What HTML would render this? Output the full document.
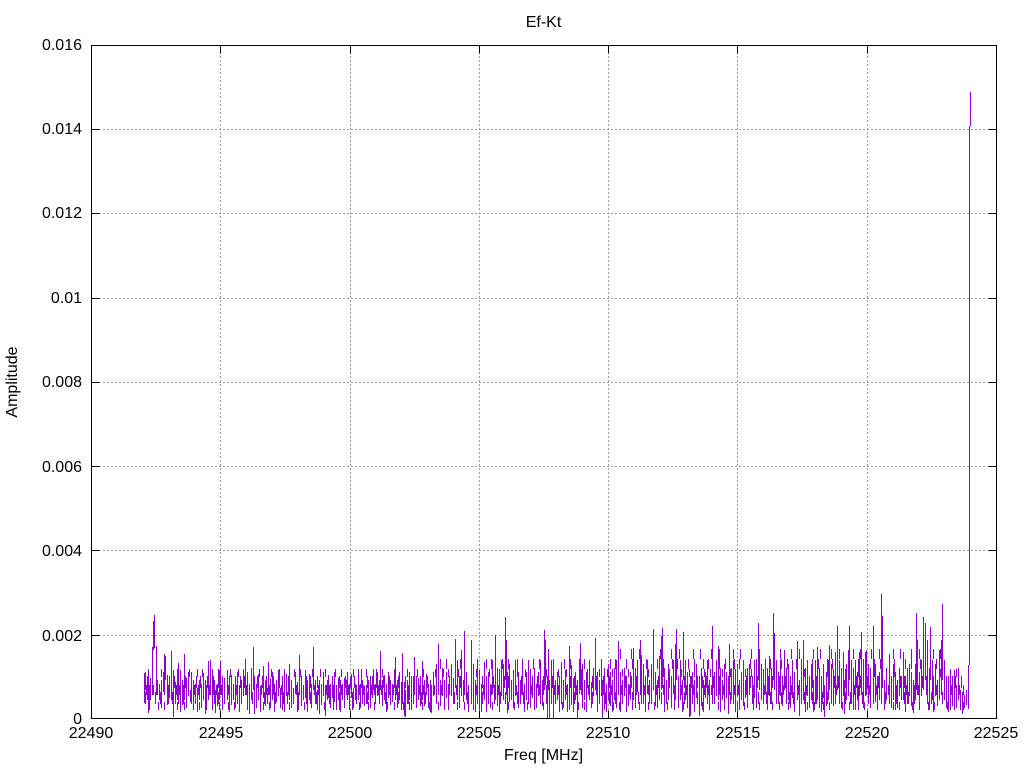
<!DOCTYPE html>
<html><head><meta charset="utf-8"><title>Ef-Kt</title>
<style>html,body{margin:0;padding:0;background:#fff}svg{display:block}text{font-family:"Liberation Sans",sans-serif;font-size:16px;fill:#000}</style>
</head><body>
<svg width="1024" height="768" viewBox="0 0 1024 768" xmlns="http://www.w3.org/2000/svg">
<rect width="1024" height="768" fill="#fff"/>
<g stroke="#a0a0a0" stroke-width="1" stroke-dasharray="2 2" fill="none">
<path d="M99 635.5H988M99 550.5H988M99 466.5H988M99 382.5H988M99 298.5H988M99 213.5H988M99 129.5H988"/>
<path d="M220.5 710V53M350.5 710V53M479.5 710V53M608.5 710V53M737.5 710V53M867.5 710V53"/>
</g>
<g stroke="#000" stroke-width="1" fill="none">
<path d="M91.5 635.5h8M91.5 550.5h8M91.5 466.5h8M91.5 382.5h8M91.5 298.5h8M91.5 213.5h8M91.5 129.5h8"/>
<path d="M996.5 635.5h-8M996.5 550.5h-8M996.5 466.5h-8M996.5 382.5h-8M996.5 298.5h-8M996.5 213.5h-8M996.5 129.5h-8"/>
<path d="M220.5 718.5v-8M350.5 718.5v-8M479.5 718.5v-8M608.5 718.5v-8M737.5 718.5v-8M867.5 718.5v-8"/>
<path d="M220.5 45.5v8M350.5 45.5v8M479.5 45.5v8M608.5 45.5v8M737.5 45.5v8M867.5 45.5v8"/>
</g>
<g fill="none" stroke="#9400d3">
<path d="M146 690H966" stroke-width="10" stroke-dasharray="1 2 1 3 1 2 1 4"/>
<path d="M147 682H966" stroke-width="12" stroke-dasharray="1 4 1 3 1 6 1 5"/>
<path d="M145 698H964" stroke-width="12" stroke-dasharray="1 3 1 5 1 4 1 7"/>
<path d="M148 673H966" stroke-width="8" stroke-dasharray="1 7 1 4 1 9 1 5 1 11"/>
<path d="M149 706H964" stroke-width="8" stroke-dasharray="1 8 1 5 1 12 1 6"/>
<path d="M440 664H950" stroke-width="10" stroke-dasharray="1 5 1 8 1 4 1 10"/>
<path d="M620 654H950" stroke-width="10" stroke-dasharray="1 10 1 7 1 13 1 6"/>
</g>
<path transform="translate(.5 0)" fill="none" stroke="#9400d3" stroke-width="1" d="M144 673V703M145 672V690M147 680V700M148 674V713M150 678V700M152 647V695M153 621V650M154 615V648M156 646V690M157 680V695M159 684V700M161 680V708M163 672V692M164 654V690M165 656V680M167 675V705M169 680V698M171 651V700M173 670V717M175 682V704M177 675V700M178 663V695M180 670V712M182 680V705M184 654V700M186 678V708M188 672V696M190 690V702M191 672V695M193 680V710M195 684V704M197 688V712M199 680V700M201 684V708M203 673V700M205 680V714M206 690V710M208 661V700M210 660V695M212 672V708M214 680V703M215 690V713M217 684V706M219 670V700M220 661V695M222 682V710M224 678V702M227 670V700M229 682V712M231 675V705M233 684V700M235 678V708M237 672V694M239 686V712M241 680V704M243 672V696M245 659V695M247 672V700M249 684V714M251 668V700M253 647V690M254 676V714M256 684V708M258 674V700M260 686V712M263 666V698M265 680V706M267 688V704M268 662V695M270 678V708M272 672V700M274 684V712M276 680V702M278 670V696M280 688V708M282 676V702M284 684V712M286 674V696M289 664V700M291 680V708M293 688V704M295 672V694M297 682V712M299 655V695M301 680V706M303 686V700M305 670V698M307 680V712M309 674V700M311 684V708M313 647V690M315 680V704M317 690V708M319 680V714M321 684V705M323 672V696M325 685V716M327 680V700M328 675V698M330 684V708M332 680V698M334 672V702M336 686V710M338 678V700M340 680V712M342 684V700M344 678V708M346 680V695M347 672V700M349 684V710M351 674V698M353 688V708M355 684V700M358 669V700M360 684V708M362 680V702M364 686V706M366 690V704M368 680V700M370 676V708M372 682V698M373 669V690M375 684V704M377 672V696M379 680V700M380 651V690M382 680V706M384 675V700M386 684V712M388 672V698M390 680V705M392 684V702M395 657V700M397 680V708M399 672V700M401 682V710M402 653V695M404 682V716M405 690V717M407 680V704M409 672V700M411 684V710M413 676V698M414 657V695M416 682V708M418 678V700M420 684V706M422 661V700M424 680V706M426 674V695M428 684V708M430 680V712M431 690V713M433 672V696M436 664V700M438 644V685M440 680V706M442 668V696M444 680V700M446 672V698M448 684V710M451 664V696M453 678V704M455 639V680M457 660V700M459 676V708M461 650V696M463 680V702M464 631V685M466 672V700M468 688V712M471 640V700M473 664V708M475 680V712M477 660V696M479 670V710M481 684V712M484 662V700M486 680V712M488 672V704M490 684V708M492 660V694M495 635V700M497 668V706M499 684V712M501 660V696M503 664V700M505 617V680M506 640V690M507 672V713M509 664V702M511 680V700M513 670V708M515 660V696M518 672V708M520 680V704M522 664V695M524 684V712M526 672V700M528 660V694M530 682V708M532 676V698M534 668V702M536 684V708M538 672V696M540 660V700M542 680V706M544 630V690M545 640V685M547 676V718M548 649V690M549 680V719M551 660V700M553 668V719M555 680V704M557 672V700M559 688V712M561 662V704M563 680V708M565 670V700M567 684V712M569 646V695M571 665V705M573 678V712M575 672V700M577 680V718M579 660V694M580 643V690M582 664V708M584 680V700M586 672V712M589 660V700M591 682V708M593 668V696M595 638V690M597 672V712M599 680V704M601 662V696M602 680V718M604 668V706M606 684V712M608 664V700M610 672V706M612 680V712M614 668V700M616 660V708M618 641V690M620 672V712M622 680V704M624 668V696M626 676V712M628 684V706M630 672V700M633 648V700M635 668V708M637 660V692M640 640V695M641 655V704M643 664V700M645 676V712M647 660V694M649 680V704M651 664V698M653 629V690M655 672V706M657 680V708M659 656V700M661 636V690M662 628V680M664 668V712M666 680V704M668 664V700M671 676V708M673 660V694M675 644V700M676 629V680M678 676V708M680 660V700M682 680V712M683 632V680M685 660V700M687 672V708M689 684V717M690 676V716M692 672V704M694 680V712M696 664V698M699 676V716M701 668V706M703 680V712M705 672V698M707 660V700M709 680V708M712 626V700M714 672V704M716 660V696M718 646V700M720 668V712M722 680V700M724 664V708M726 672V698M728 680V714M729 644V695M731 668V700M733 660V704M735 676V712M737 664V696M739 680V710M741 672V700M743 660V706M745 680V698M747 668V708M749 664V692M752 676V704M754 660V698M756 668V708M758 623V680M759 652V690M761 664V700M763 676V704M765 660V694M767 668V710M769 656V696M771 668V704M773 613V680M774 633V690M776 660V698M778 672V704M780 660V696M782 676V706M784 650V690M786 668V704M788 664V700M790 680V708M792 660V698M794 672V712M797 641V700M799 680V716M801 664V704M803 640V700M805 668V712M807 660V696M809 676V708M811 664V700M813 680V712M815 660V704M817 647V700M819 668V708M821 676V712M823 664V698M824 690V717M826 672V706M828 660V700M829 645V690M831 664V704M833 672V706M835 652V696M837 626V690M839 660V700M841 668V708M843 652V696M844 680V714M846 664V700M848 650V696M849 626V680M851 660V704M853 668V710M855 660V710M857 672V700M859 652V696M861 632V690M863 664V708M865 652V696M866 650V690M868 664V700M870 668V708M873 626V700M875 664V702M877 676V708M879 672V700M881 594V690M882 616V680M884 680V708M886 668V700M889 654V704M891 676V708M893 664V700M895 672V710M897 680V708M899 668V696M901 676V700M903 652V700M905 676V712M907 668V704M909 664V696M911 672V706M913 680V713M915 664V700M916 613V690M917 640V695M919 672V708M921 660V696M923 617V690M925 623V680M927 640V700M929 668V710M930 627V680M932 660V700M933 680V712M935 664V696M937 680V706M939 650V700M941 640V690M942 604V680M944 660V700M946 676V708M948 690V712M950 670V710M952 676V706M954 670V704M956 690V708M958 668V700M960 690V710M962 692V714M964 695V708M966 690V705M968 665V709M969 126V665M970 92V126"/>
<rect x="91.5" y="45.5" width="905" height="673" fill="none" stroke="#000" stroke-width="1"/>
<g text-anchor="end">
<text x="82" y="724">0</text><text x="82" y="641">0.002</text><text x="82" y="556">0.004</text><text x="82" y="472">0.006</text><text x="82" y="387">0.008</text><text x="82" y="303">0.01</text><text x="82" y="218">0.012</text><text x="82" y="134">0.014</text><text x="82" y="50">0.016</text>
</g>
<g text-anchor="middle">
<text x="91" y="738">22490</text><text x="221" y="738">22495</text><text x="350" y="738">22500</text><text x="479" y="738">22505</text><text x="608" y="738">22510</text><text x="738" y="738">22515</text><text x="867" y="738">22520</text><text x="996" y="738">22525</text>
<text x="543.5" y="27">Ef-Kt</text>
<text x="543.5" y="760">Freq [MHz]</text>
<text transform="translate(17 382) rotate(-90)">Amplitude</text>
</g>
</svg>
</body></html>
